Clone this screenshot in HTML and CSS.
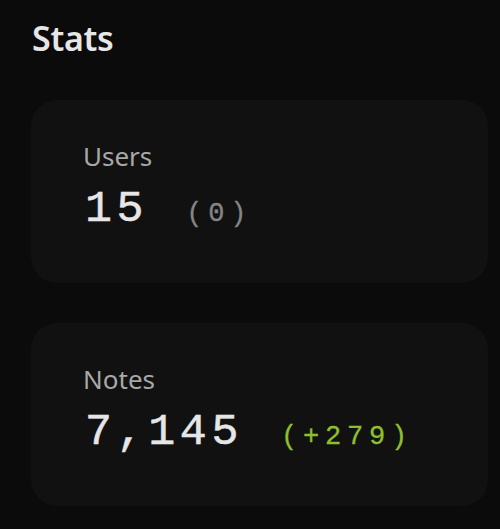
FILE: index.html
```html
<!DOCTYPE html>
<html lang="en">
<head>
  <meta charset="UTF-8" />
  <meta name="viewport" content="width=device-width, initial-scale=1.0"/>
  <title>Stats</title>
  <link rel="stylesheet" href="styles.css">
</head>
<body>
  <h1 class="title">Stats</h1>

  <div class="card">
    <div class="label">Users</div>
    <div class="value">
      <span class="num">15</span>
      <span class="diff">(0)</span>
    </div>
  </div>

  <div class="card">
    <div class="label">Notes</div>
    <div class="value">
      <span class="num">7,145</span>
      <span class="diff up">(+279)</span>
    </div>
  </div>
</body>
</html>
```

FILE: styles.css
```css
html, body {
  background: #0b0b0b;
}
body {
  margin: 0;
  padding: 0 12px 0 31px;
  color: #e8e8e8;
  font-family: "Noto Sans", "Open Sans", sans-serif;
}
.title {
  margin: 0;
  padding: 14px 0 0 1px;
  font-size: 34px;
  font-weight: 600;
  letter-spacing: -0.3px;
  line-height: 48px;
  color: #e6e6e6;
}
.card {
  background: #111111;
  border-radius: 26px;
  height: 183px;
  margin-top: 38px;
  padding: 38px 52px 0;
  box-sizing: border-box;
}
.card + .card {
  margin-top: 40px;
}
.label {
  font-size: 26px;
  line-height: 36px;
  color: #a8a8a8;
}
.value {
  display: flex;
  align-items: baseline;
  gap: 38px;
  padding-left: 2px;
  font-family: "Liberation Mono", monospace;
  margin-top: 14px;
}
.num {
  font-size: 45px;
  line-height: 44px;
  letter-spacing: 4.6px;
  color: #e6e6e6;
  -webkit-text-stroke: 0.5px #e6e6e6;
}
.diff {
  font-size: 27px;
  line-height: 24px;
  letter-spacing: 5.8px;
  color: #858585;
  -webkit-text-stroke: 0.3px #858585;
}
.diff.up {
  color: #8fc02c;
  -webkit-text-stroke-color: #8fc02c;
}
```
